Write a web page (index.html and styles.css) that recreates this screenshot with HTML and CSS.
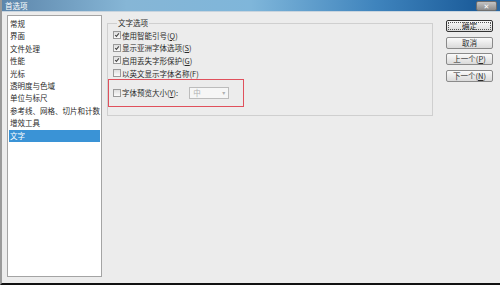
FILE: index.html
```html
<!DOCTYPE html>
<html lang="zh-CN">
<head>
<meta charset="utf-8">
<title>首选项</title>
<link rel="stylesheet" href="styles.css">
</head>
<body>
<div class="win">
  <div class="titlebar">
    <span class="title">首选项</span>
    <span class="close">✕</span>
  </div>
  <div class="content">
    <ul class="list">
      <li>常规</li>
      <li>界面</li>
      <li>文件处理</li>
      <li>性能</li>
      <li>光标</li>
      <li>透明度与色域</li>
      <li>单位与标尺</li>
      <li>参考线、网格、切片和计数</li>
      <li>增效工具</li>
      <li class="sel">文字</li>
    </ul>
    <div class="main">
      <fieldset class="group">
        <legend>文字选项</legend>
        <div class="row"><span class="cb on"><svg viewBox="0 0 8 8"><polyline points="1.5,4 3.2,5.8 6.5,1.8"/></svg></span>使用智能引号(<u>Q</u>)</div>
        <div class="row"><span class="cb on"><svg viewBox="0 0 8 8"><polyline points="1.5,4 3.2,5.8 6.5,1.8"/></svg></span>显示亚洲字体选项(<u>S</u>)</div>
        <div class="row"><span class="cb on"><svg viewBox="0 0 8 8"><polyline points="1.5,4 3.2,5.8 6.5,1.8"/></svg></span>启用丢失字形保护(<u>G</u>)</div>
        <div class="row"><span class="cb"></span>以英文显示字体名称(F)</div>
        <div class="mark">
          <div class="row"><span class="cb"></span>字体预览大小(<u>Y</u>):<span class="select"><span>中</span><span class="arrow">▾</span></span></div>
        </div>
      </fieldset>
    </div>
    <div class="buttons">
      <div class="btn def">确定</div>
      <div class="btn">取消</div>
      <div class="btn">上一个(<u>P</u>)</div>
      <div class="btn">下一个(<u>N</u>)</div>
    </div>
  </div>
</div>
</body>
</html>
```
FILE: styles.css
```css
* { box-sizing: border-box; }
body {
  margin: 0;
  font-family: "Noto Sans CJK SC", "DejaVu Sans", sans-serif;
  font-size: 7.5px;
  color: #2a2a2a;
}
.win {
  width: 500px;
  height: 285px;
  background: #ececec;
  border-left: 2px solid #9a9a9a;
  border-bottom: 2px solid #111;
  display: flex;
  flex-direction: column;
}
.titlebar {
  height: 12px;
  flex: none;
  background: linear-gradient(to right, #5d86ab 0%, #86b6d6 25%, #7fb6da 50%, #3f84bd 75%, #1c5d9b 95%, #2867a2 100%);
  border-bottom: 1px solid #c8d4de;
  display: flex;
  align-items: center;
  justify-content: space-between;
}
.title {
  color: #fff;
  font-size: 7.5px;
  line-height: 11px;
  padding-left: 3px;
}
.close {
  width: 21px;
  height: 10px;
  margin-right: 3px;
  background: linear-gradient(#c4c4c4, #8c8c8c);
  border: 1px solid #6e6e6e;
  border-radius: 2px;
  color: #fff;
  font-size: 7px;
  line-height: 8px;
  text-align: center;
}
.content {
  flex: 1;
  display: flex;
  padding: 3px 7px 6px 5px;
}
.list {
  width: 95px;
  margin: 0;
  padding: 2px 1px;
  list-style: none;
  background: #fff;
  border: 1px solid #a4a4a4;
}
.list li {
  height: 12.4px;
  line-height: 12.4px;
  padding-left: 1px;
  white-space: nowrap;
}
.list li.sel {
  background: #3a93d6;
  color: #fff;
}
.main {
  flex: 1;
  padding-left: 5px;
}
.group {
  margin: 2px 0 0 0;
  padding: 0 5px 8px 5px;
  border: 1px solid #cfcfcf;
  min-width: 0;
}
.group legend {
  margin-left: 4px;
  padding: 0 1px;
  line-height: 12px;
}
.row {
  height: 12.6px;
  display: flex;
  align-items: center;
  white-space: nowrap;
}
.cb {
  width: 8px;
  height: 8px;
  margin-right: 1px;
  border: 1px solid #9a9a9a;
  background: linear-gradient(#dedede, #fafafa);
  display: inline-flex;
}
.cb svg {
  width: 6px;
  height: 6px;
  fill: none;
  stroke: #444;
  stroke-width: 1.4;
}
.mark {
  margin: 0 0 0 -5px;
  width: 136px;
  padding: 6px 4px 7px 4px;
  border: 1px solid #e0505c;
}
.select {
  width: 40px;
  height: 12px;
  margin-left: 11px;
  border: 1px solid #bcbcbc;
  background: #f6f6f6;
  color: #b0b0b0;
  display: flex;
  align-items: center;
  justify-content: space-between;
  padding: 0 3px;
}
.arrow { font-size: 6px; }
.buttons {
  width: 47px;
  margin-left: 13px;
  padding-top: 5px;
  display: flex;
  flex-direction: column;
  gap: 4.6px;
}
.btn {
  height: 12px;
  border: 1px solid #8a8a8a;
  border-radius: 2px;
  background: linear-gradient(#fafafa, #dadada);
  text-align: center;
  line-height: 10px;
}
.btn.def {
  border-color: #333;
  outline: 1px dotted #555;
  outline-offset: -3px;
}
```
